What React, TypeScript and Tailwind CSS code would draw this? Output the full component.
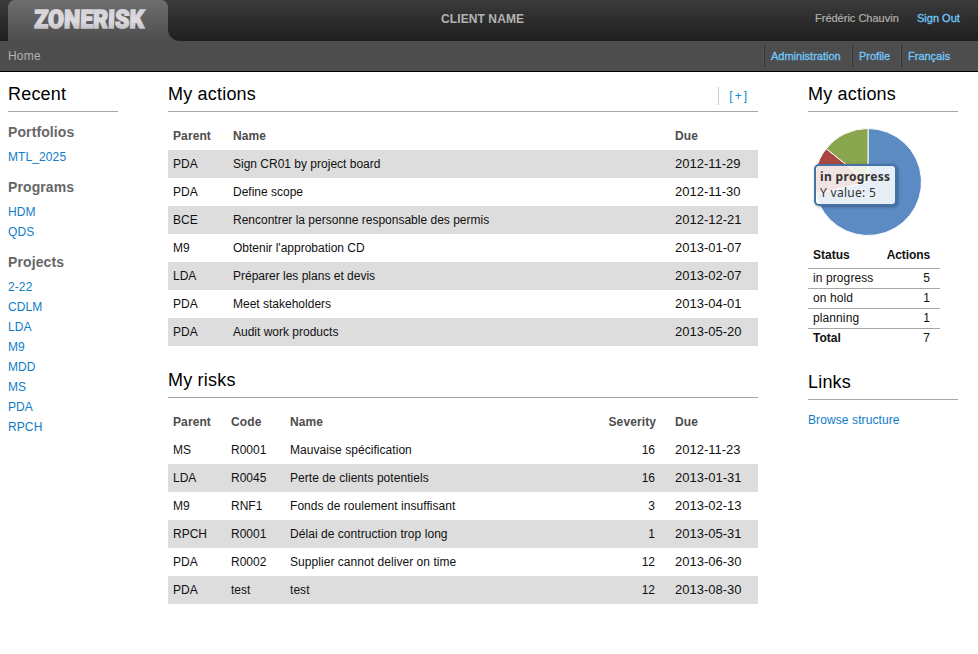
import type { ReactNode } from "react";

const actions: string[][] = [
  ["PDA", "Sign CR01 by project board", "2012-11-29"],
  ["PDA", "Define scope", "2012-11-30"],
  ["BCE", "Rencontrer la personne responsable des permis", "2012-12-21"],
  ["M9", "Obtenir l'approbation CD", "2013-01-07"],
  ["LDA", "Préparer les plans et devis", "2013-02-07"],
  ["PDA", "Meet stakeholders", "2013-04-01"],
  ["PDA", "Audit work products", "2013-05-20"],
];

const risks: string[][] = [
  ["MS", "R0001", "Mauvaise spécification", "16", "2012-11-23"],
  ["LDA", "R0045", "Perte de clients potentiels", "16", "2013-01-31"],
  ["M9", "RNF1", "Fonds de roulement insuffisant", "3", "2013-02-13"],
  ["RPCH", "R0001", "Délai de contruction trop long", "1", "2013-05-31"],
  ["PDA", "R0002", "Supplier cannot deliver on time", "12", "2013-06-30"],
  ["PDA", "test", "test", "12", "2013-08-30"],
];

const recent = [
  { title: "Portfolios", items: ["MTL_2025"] },
  { title: "Programs", items: ["HDM", "QDS"] },
  { title: "Projects", items: ["2-22", "CDLM", "LDA", "M9", "MDD", "MS", "PDA", "RPCH"] },
];

function Heading({ children, extra }: { children: ReactNode; extra?: ReactNode }) {
  return (
    <div className="flex h-[30px] items-start justify-between border-b border-[#a6a6a6]">
      <h2 className="text-[18px] leading-[24px] tracking-[0.2px] text-black">{children}</h2>
      {extra}
    </div>
  );
}

function Logo() {
  return (
    <svg width="160" height="41" viewBox="0 0 160 41" className="block">
      <defs>
        <linearGradient id="logoFill" x1="0" y1="0" x2="0" y2="1">
          <stop offset="0" stopColor="#d2d0d6" />
          <stop offset="0.55" stopColor="#dddbe0" />
          <stop offset="1" stopColor="#b4b2b8" />
        </linearGradient>
      </defs>
      <text
        x="26.5"
        y="28.5"
        textLength="110"
        lengthAdjust="spacingAndGlyphs"
        fill="url(#logoFill)"
        stroke="url(#logoFill)"
        strokeWidth="1.4"
        transform="translate(0.5 0) skewX(-2)"
        className="font-['Roboto',sans-serif] text-[25.5px] font-black"
      >
        ZONERISK
      </text>
    </svg>
  );
}

function Pie() {
  const r = 53.5;
  const at = (turn: number) => {
    const a = turn * 2 * Math.PI;
    return `${60 + r * Math.sin(a)} ${60 - r * Math.cos(a)}`;
  };
  const slice = (from: number, to: number) =>
    `M60 60 L${at(from)} A${r} ${r} 0 ${to - from > 0.5 ? 1 : 0} 1 ${at(to)} Z`;
  return (
    <svg width="120" height="120" viewBox="0 0 120 120" className="block" stroke="#fff" strokeWidth="1" strokeLinejoin="round">
      <path d={slice(0, 5 / 7)} fill="#5c8bc4" />
      <path d={slice(5 / 7, 6 / 7)} fill="#aa4643" />
      <path d={slice(6 / 7, 1)} fill="#89a54e" />
    </svg>
  );
}

export default function App() {
  return (
    <div className="h-[654px] w-[978px] overflow-hidden bg-white font-['Liberation_Sans',Arial,sans-serif] text-[12px] text-[#111]">
      <header className="flex h-[41px] bg-linear-to-b from-[#3b3b3b] to-[#1e1e1e] pl-2">
        <div className="h-[41px] w-[160px] rounded-t-[7px] bg-linear-to-b from-[#6f6f6f] to-[#4d4d4d]">
          <Logo />
        </div>
        <svg width="12" height="12" viewBox="0 0 12 12" className="self-end">
          <path d="M0 0 A12 12 0 0 0 12 12 H0 Z" fill="#4d4d4d" />
        </svg>
        <div className="w-[261px]" />
        <div className="w-[373px] text-[12px] leading-[38px] font-bold tracking-[0.1px] text-[#b3b3b3]">CLIENT NAME</div>
        <div className="w-[103px] pl-px text-[11px] leading-[37px] whitespace-nowrap text-[#b3b0ac] [-webkit-text-stroke:0.2px]">Frédéric Chauvin</div>
        <a className="text-[11px] leading-[37px] whitespace-nowrap text-[#72c8fb] [-webkit-text-stroke:0.3px]">Sign Out</a>
      </header>
      <nav className="flex h-[31px] items-center border-b border-black bg-[#4d4d4d] pl-2">
        <span className="w-[756px] tracking-[0.2px] text-[#b3b3b3]">Home</span>
        <div className="flex text-[11px] leading-[22px] whitespace-nowrap text-[#72c8fb] [-webkit-text-stroke:0.3px]">
          <a className="w-[88px] border-l border-[#333] pl-[6px] shadow-[-1px_0_#5a5a5a]">Administration</a>
          <a className="w-[49px] border-l border-[#333] pl-[6px] shadow-[-1px_0_#5a5a5a]">Profile</a>
          <a className="border-l border-[#333] pl-[6px] shadow-[-1px_0_#5a5a5a]">Français</a>
        </div>
      </nav>
      <div className="flex pt-[10px] pl-2">
        <aside className="w-[110px]">
          <Heading>Recent</Heading>
          {recent.map((group) => (
            <section key={group.title} className="pt-[10px]">
              <h3 className="mb-[5px] text-[14px] leading-[20px] font-bold tracking-[0.1px] text-[#666]">{group.title}</h3>
              {group.items.map((item) => (
                <a key={item} className="block leading-[20px] tracking-[0.1px] text-[#0e7cc8]">{item}</a>
              ))}
            </section>
          ))}
        </aside>
        <main className="ml-[50px] w-[590px]">
          <Heading
            extra={
              <a className="mt-[5px] mr-[9px] border-l border-[#ccc] pl-[10px] leading-[18px] tracking-[2px] text-[#1289d0]">[+]</a>
            }
          >
            My actions
          </Heading>
          <table className="mt-[10px] w-full table-fixed border-collapse text-left leading-[28px]">
            <colgroup>
              <col className="w-[60px]" />
              <col className="w-[442px]" />
              <col className="w-[88px]" />
            </colgroup>
            <thead className="tracking-[0.1px] text-[#4d4d4d]">
              <tr>
                <th className="pl-[5px]">Parent</th>
                <th className="pl-[5px]">Name</th>
                <th className="pl-[5px]">Due</th>
              </tr>
            </thead>
            <tbody>
              {actions.map(([parent, name, due]) => (
                <tr key={name} className="odd:bg-[#ddd]">
                  <td className="pl-[5px]">{parent}</td>
                  <td className="pl-[5px]">{name}</td>
                  <td className="pl-[5px] text-[13px] leading-[28px]">{due}</td>
                </tr>
              ))}
            </tbody>
          </table>
          <div className="mt-[22px]">
            <Heading>My risks</Heading>
          </div>
          <table className="mt-[10px] w-full table-fixed border-collapse text-left leading-[28px]">
            <colgroup>
              <col className="w-[58px]" />
              <col className="w-[59px]" />
              <col className="w-[290px]" />
              <col className="w-[95px]" />
              <col className="w-[88px]" />
            </colgroup>
            <thead className="tracking-[0.1px] text-[#4d4d4d]">
              <tr>
                <th className="pl-[5px]">Parent</th>
                <th className="pl-[5px]">Code</th>
                <th className="pl-[5px]">Name</th>
                <th className="pr-[14px] text-right">Severity</th>
                <th className="pl-[5px]">Due</th>
              </tr>
            </thead>
            <tbody>
              {risks.map(([parent, code, name, severity, due]) => (
                <tr key={name} className="even:bg-[#ddd]">
                  <td className="pl-[5px]">{parent}</td>
                  <td className="pl-[5px]">{code}</td>
                  <td className="pl-[5px] tracking-[0.05px]">{name}</td>
                  <td className="pr-[15px] text-right">{severity}</td>
                  <td className="pl-[5px] text-[13px] leading-[28px]">{due}</td>
                </tr>
              ))}
            </tbody>
          </table>
        </main>
        <aside className="ml-[50px] w-[150px]">
          <Heading>My actions</Heading>
          <div className="relative mt-[10px] h-[120px] w-[120px]">
            <Pie />
            <div className="absolute top-[42px] left-[6px] h-[42px] w-[83px] rounded-[5px] border-2 border-[#4572a7] bg-white/85 pt-[3px] pl-[4px] font-['Noto_Sans',sans-serif] text-[12px] leading-[16px] whitespace-nowrap text-[#333] shadow-[1px_1px_3px_rgba(0,0,0,0.35)]">
              <div className="font-bold tracking-[0.35px]">in progress</div>
              <div className="tracking-[0.3px]">Y value: 5</div>
            </div>
          </div>
          <table className="mt-[2px] w-[132px] table-fixed border-collapse text-left leading-[19px] whitespace-nowrap text-[#111]">
            <colgroup>
              <col className="w-[72px]" />
              <col className="w-[60px]" />
            </colgroup>
            <thead className="leading-[22px]">
              <tr className="border-b border-[#a6a6a6]">
                <th className="pb-[2px] pl-[5px]">Status</th>
                <th className="pr-[10px] pb-[2px] text-right tracking-[-0.1px]">Actions</th>
              </tr>
            </thead>
            <tbody>
              {[["in progress", "5"], ["on hold", "1"], ["planning", "1"]].map(([status, n]) => (
                <tr key={status} className="border-b border-[#a6a6a6]">
                  <td className="pl-[5px] tracking-[0.1px]">{status}</td>
                  <td className="pr-[10px] text-right">{n}</td>
                </tr>
              ))}
              <tr>
                <td className="pl-[5px] font-bold">Total</td>
                <td className="pr-[10px] text-right">7</td>
              </tr>
            </tbody>
          </table>
          <div className="mt-[22px]">
            <Heading>Links</Heading>
          </div>
          <a className="mt-[10px] block leading-[20px] tracking-[0.1px] text-[#0e7cc8]">Browse structure</a>
        </aside>
      </div>
    </div>
  );
}
